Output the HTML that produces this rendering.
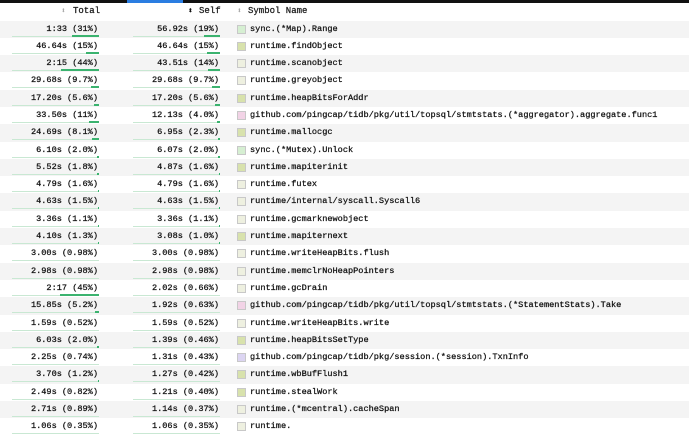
<!DOCTYPE html>
<html><head><meta charset="utf-8"><style>
*{margin:0;padding:0;box-sizing:border-box}
body{width:689px;height:426px;overflow:hidden;background:#fff;font-family:"Liberation Mono","DejaVu Sans Mono",monospace;font-size:8.6px;color:#111;-webkit-text-stroke:0.25px #111;position:relative}
.top{position:absolute;left:0;top:0;width:689px;height:3px;background:#111}
.top i{position:absolute;top:0;height:3px;background:#2a7de1}
.hd{position:absolute;top:3px;left:0;width:689px;height:17.5px;line-height:17.5px;color:#222;font-size:9px}
.hd span{position:absolute}
.ar{color:#aaa;font-size:8px;-webkit-text-stroke:0}
.rows{position:absolute;top:20.5px;left:0;width:689px}
.r{position:relative;height:17.3px;line-height:17.3px;white-space:nowrap}
.r:nth-child(odd){background:#f4f4f4}
.t,.s{position:absolute;left:0;text-align:right}
.t{width:98px}.s{width:219px}
.n{position:absolute;left:250px}
.sw{position:absolute;left:237px;top:4px;width:9px;height:9px;border:1px solid #c8c8c8;background:#e4ebcc}
.b{position:absolute;top:15px;height:1px;width:87px;background:#c9e8d3}
.b1{left:12px}.b2{left:133px}
.b i{position:absolute;right:0;top:-1px;height:2px;background:#3bb36f}
.g{background:#d6efd2}.o{background:#d8e2ac}.l{background:#eef0e0}.p{background:#f2d3e6}.v{background:#dcd5f2}
</style></head><body>
<div class="top"><i style="left:127px;width:56px"></i></div>
<div class="hd">
<span class="ar" style="left:61px">⬍</span><span style="left:73px">Total</span>
<span style="left:188px;color:#111;font-size:8px">⬍</span><span style="left:199px">Self</span>
<span class="ar" style="left:237px">⬍</span><span style="left:248px">Symbol Name</span>
</div>
<div class="rows">
<div class="r"><span class="t">1:33 (31%)</span><span class="s">56.92s (19%)</span><span class="sw g"></span><span class="n">sync.(*Map).Range</span><div class="b b1"><i style="width:27px"></i></div><div class="b b2"><i style="width:16px"></i></div></div>
<div class="r"><span class="t">46.64s (15%)</span><span class="s">46.64s (15%)</span><span class="sw o"></span><span class="n">runtime.findObject</span><div class="b b1"><i style="width:13px"></i></div><div class="b b2"><i style="width:13px"></i></div></div>
<div class="r"><span class="t">2:15 (44%)</span><span class="s">43.51s (14%)</span><span class="sw l"></span><span class="n">runtime.scanobject</span><div class="b b1"><i style="width:38px"></i></div><div class="b b2"><i style="width:12px"></i></div></div>
<div class="r"><span class="t">29.68s (9.7%)</span><span class="s">29.68s (9.7%)</span><span class="sw l"></span><span class="n">runtime.greyobject</span><div class="b b1"><i style="width:8px"></i></div><div class="b b2"><i style="width:8px"></i></div></div>
<div class="r"><span class="t">17.20s (5.6%)</span><span class="s">17.20s (5.6%)</span><span class="sw o"></span><span class="n">runtime.heapBitsForAddr</span><div class="b b1"><i style="width:5px"></i></div><div class="b b2"><i style="width:5px"></i></div></div>
<div class="r"><span class="t">33.50s (11%)</span><span class="s">12.13s (4.0%)</span><span class="sw p"></span><span class="n">github.com/pingcap/tidb/pkg/util/topsql/stmtstats.(*aggregator).aggregate.func1</span><div class="b b1"><i style="width:10px"></i></div><div class="b b2"><i style="width:3px"></i></div></div>
<div class="r"><span class="t">24.69s (8.1%)</span><span class="s">6.95s (2.3%)</span><span class="sw o"></span><span class="n">runtime.mallocgc</span><div class="b b1"><i style="width:7px"></i></div><div class="b b2"><i style="width:2px"></i></div></div>
<div class="r"><span class="t">6.10s (2.0%)</span><span class="s">6.07s (2.0%)</span><span class="sw g"></span><span class="n">sync.(*Mutex).Unlock</span><div class="b b1"><i style="width:2px"></i></div><div class="b b2"><i style="width:2px"></i></div></div>
<div class="r"><span class="t">5.52s (1.8%)</span><span class="s">4.87s (1.6%)</span><span class="sw o"></span><span class="n">runtime.mapiterinit</span><div class="b b1"><i style="width:2px"></i></div><div class="b b2"><i style="width:1px"></i></div></div>
<div class="r"><span class="t">4.79s (1.6%)</span><span class="s">4.79s (1.6%)</span><span class="sw l"></span><span class="n">runtime.futex</span><div class="b b1"><i style="width:1px"></i></div><div class="b b2"><i style="width:1px"></i></div></div>
<div class="r"><span class="t">4.63s (1.5%)</span><span class="s">4.63s (1.5%)</span><span class="sw l"></span><span class="n">runtime/internal/syscall.Syscall6</span><div class="b b1"><i style="width:1px"></i></div><div class="b b2"><i style="width:1px"></i></div></div>
<div class="r"><span class="t">3.36s (1.1%)</span><span class="s">3.36s (1.1%)</span><span class="sw l"></span><span class="n">runtime.gcmarknewobject</span><div class="b b1"><i style="width:1px"></i></div><div class="b b2"><i style="width:1px"></i></div></div>
<div class="r"><span class="t">4.10s (1.3%)</span><span class="s">3.08s (1.0%)</span><span class="sw o"></span><span class="n">runtime.mapiternext</span><div class="b b1"><i style="width:1px"></i></div><div class="b b2"><i style="width:1px"></i></div></div>
<div class="r"><span class="t">3.00s (0.98%)</span><span class="s">3.00s (0.98%)</span><span class="sw l"></span><span class="n">runtime.writeHeapBits.flush</span><div class="b b1"></div><div class="b b2"></div></div>
<div class="r"><span class="t">2.98s (0.98%)</span><span class="s">2.98s (0.98%)</span><span class="sw l"></span><span class="n">runtime.memclrNoHeapPointers</span><div class="b b1"></div><div class="b b2"></div></div>
<div class="r"><span class="t">2:17 (45%)</span><span class="s">2.02s (0.66%)</span><span class="sw l"></span><span class="n">runtime.gcDrain</span><div class="b b1"><i style="width:39px"></i></div><div class="b b2"></div></div>
<div class="r"><span class="t">15.85s (5.2%)</span><span class="s">1.92s (0.63%)</span><span class="sw p"></span><span class="n">github.com/pingcap/tidb/pkg/util/topsql/stmtstats.(*StatementStats).Take</span><div class="b b1"><i style="width:4px"></i></div><div class="b b2"></div></div>
<div class="r"><span class="t">1.59s (0.52%)</span><span class="s">1.59s (0.52%)</span><span class="sw l"></span><span class="n">runtime.writeHeapBits.write</span><div class="b b1"></div><div class="b b2"></div></div>
<div class="r"><span class="t">6.03s (2.0%)</span><span class="s">1.39s (0.46%)</span><span class="sw o"></span><span class="n">runtime.heapBitsSetType</span><div class="b b1"><i style="width:2px"></i></div><div class="b b2"></div></div>
<div class="r"><span class="t">2.25s (0.74%)</span><span class="s">1.31s (0.43%)</span><span class="sw v"></span><span class="n">github.com/pingcap/tidb/pkg/session.(*session).TxnInfo</span><div class="b b1"></div><div class="b b2"></div></div>
<div class="r"><span class="t">3.70s (1.2%)</span><span class="s">1.27s (0.42%)</span><span class="sw o"></span><span class="n">runtime.wbBufFlush1</span><div class="b b1"><i style="width:1px"></i></div><div class="b b2"></div></div>
<div class="r"><span class="t">2.49s (0.82%)</span><span class="s">1.21s (0.40%)</span><span class="sw o"></span><span class="n">runtime.stealWork</span><div class="b b1"></div><div class="b b2"></div></div>
<div class="r"><span class="t">2.71s (0.89%)</span><span class="s">1.14s (0.37%)</span><span class="sw l"></span><span class="n">runtime.(*mcentral).cacheSpan</span><div class="b b1"></div><div class="b b2"></div></div>
<div class="r"><span class="t">1.06s (0.35%)</span><span class="s">1.06s (0.35%)</span><span class="sw l"></span><span class="n">runtime.</span><div class="b b1"></div><div class="b b2"></div></div>
</div>
</body></html>
